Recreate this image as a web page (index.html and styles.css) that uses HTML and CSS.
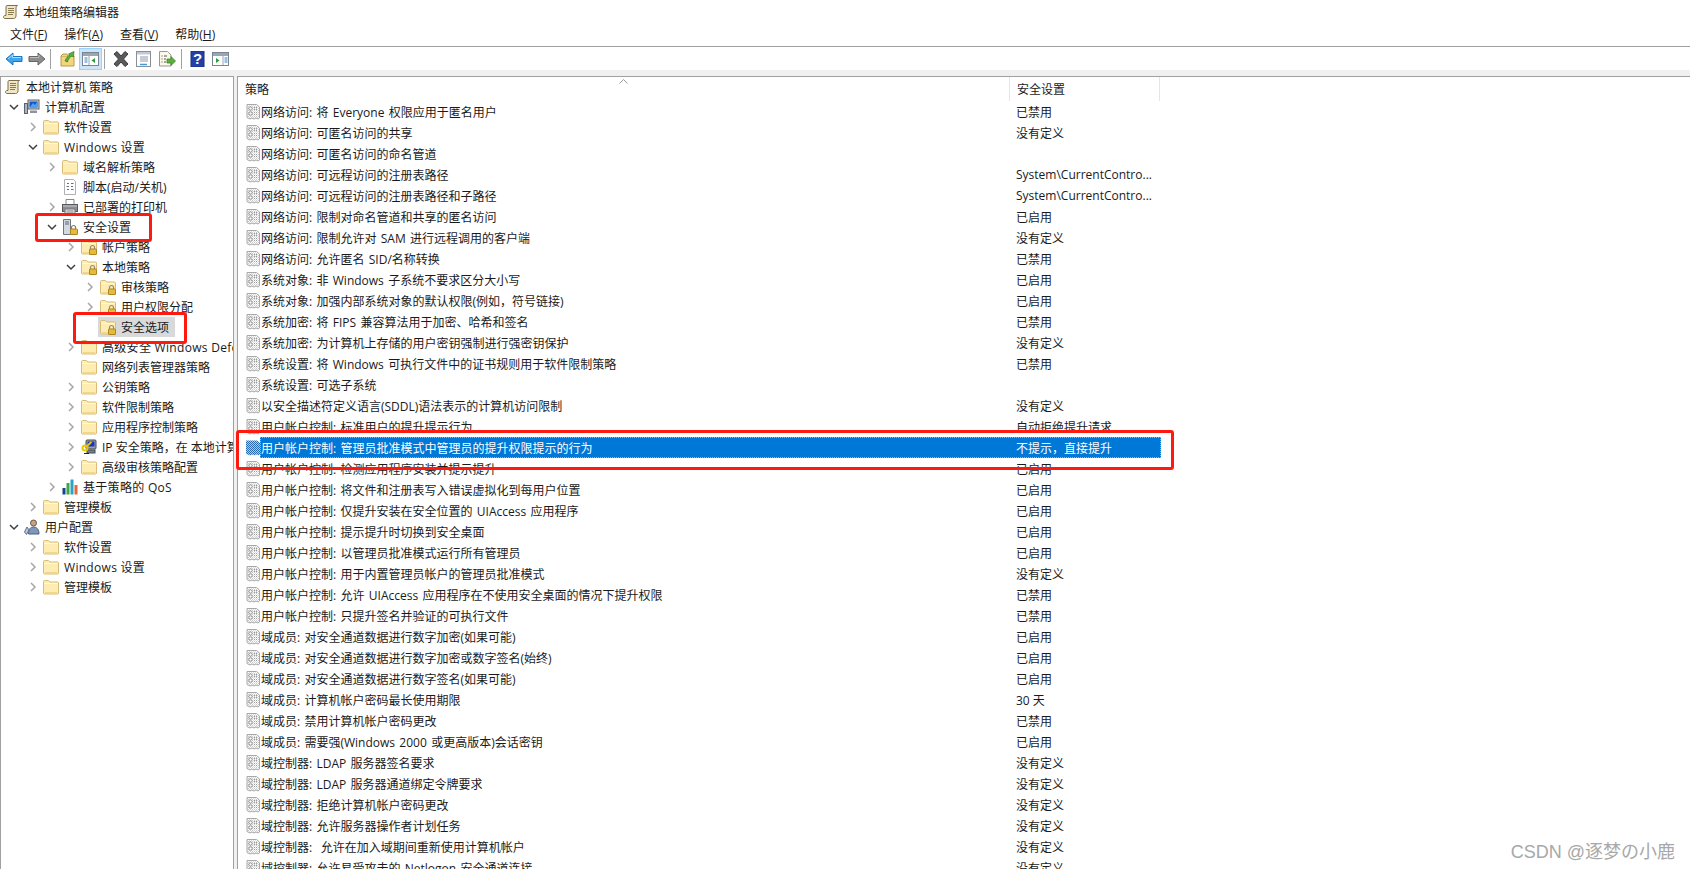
FILE: index.html
```html
<!DOCTYPE html>
<html lang="zh-CN">
<head>
<meta charset="utf-8">
<title>本地组策略编辑器</title>
<link rel="stylesheet" href="styles.css">
</head>
<body>
<svg class="defs" width="0" height="0" aria-hidden="true">
  <defs>
    <pattern id="hatch" width="2" height="2" patternUnits="userSpaceOnUse"><rect width="2" height="2" fill="#fff"/><rect width="1" height="1" fill="#c9c9c9"/><rect x="1" y="1" width="1" height="1" fill="#dcdcdc"/></pattern>
    <pattern id="hatchsel" width="2" height="2" patternUnits="userSpaceOnUse"><rect width="2" height="2" fill="#a9cdee"/><rect width="1" height="1" fill="#2a6cb4"/><rect x="1" y="1" width="1" height="1" fill="#2a6cb4"/></pattern>
    <symbol id="scroll" viewBox="0 0 16 16"><path d="M4 1.500h10.500c-1 .6-1.500 1.200-1.500 2.500v8c0 1.500-1 2.500-2.500 2.500H2c-1 0-1.500-.7-1.500-1.500S1 11.500 2 11.500h1V3c0-1 .4-1.500 1-1.500z" fill="#f2e7c4" stroke="#7d6f4e"/><path d="M5 4.500h6M5 6.500h6M5 8.500h6M5 10.500h5" stroke="#8a7b55"/></symbol>
    <symbol id="folder" viewBox="0 0 16 16"><path d="M.5 2.500c0-.6.4-1 1-1h4l1.500 1.500h7.500c.6 0 1 .4 1 1v10c0 .6-.4 1-1 1h-13c-.6 0-1-.4-1-1z" fill="#fdedb2" stroke="#d8bd7a"/><path d="M1.500 4.500h13" stroke="#fff9e2"/><path d="M2 13.500h12" stroke="#f3d68a"/></symbol>
    <symbol id="lockfolder" viewBox="0 0 16 16"><use href="#folder"/><path d="M9.500 10V8.500a2 2 0 0 1 4 0V10" fill="none" stroke="#8f8a7a" stroke-width="1.200"/><rect x="8.500" y="10" width="7" height="5.500" rx=".5" fill="#e6b93f" stroke="#ae861f"/></symbol>
    <symbol id="policy" viewBox="0 0 14 16"><path d="M1 .5h9.500l3 2.500v11l-1.500 1-2-1-2 1-2-1-2 1-3-1.500z" fill="url(#hatch)" stroke="#a8a8a8"/><circle cx="4.500" cy="4.500" r="1.700" fill="#fff" stroke="#8c8c8c"/><circle cx="4.500" cy="9.500" r="1.700" fill="#fff" stroke="#8c8c8c"/><path d="M8 3.500h3M8 5.500h3M8 8.500h3M8 10.500h3" stroke="#9a9a9a" stroke-dasharray="1 1"/></symbol>
    <symbol id="policysel" viewBox="0 0 14 16"><path d="M0 .5h11l3 2.500v11l-1.500 1.500-2-1-2 1-2-1-2 1-4.500-1.500z" fill="url(#hatchsel)"/></symbol>
    <symbol id="computer" viewBox="0 0 16 16"><rect x="4" y="1" width="11" height="9" fill="#c9cfd8" stroke="#5a6270"/><rect x="5.500" y="2.500" width="8" height="6" fill="#1556c8"/><path d="M6 8l3-4 2 2 2-3v5z" fill="#4ea1ef"/><rect x=".5" y="4.500" width="3" height="10" fill="#aeb4bd" stroke="#5a6270"/><path d="M6 11.500h7v2.500H6z" fill="#8d949e"/></symbol>
    <symbol id="script" viewBox="0 0 16 16"><path d="M2.500.5h9l2 2v13h-11z" fill="#fff" stroke="#b0b0b0"/><path d="M5 4.500h2M9 4.500h2.500M4.500 7.500h2.500M9 7.500h2M5 10.500h2M9 10.500h2.500" stroke="#5f6f82"/></symbol>
    <symbol id="printer" viewBox="0 0 16 16"><path d="M4 .5h8v5H4z" fill="#fff" stroke="#8a8a8a"/><rect x=".5" y="5.500" width="15" height="7" fill="#8b8f95" stroke="#55585c"/><path d="M1 7h14" stroke="#c5c8cc"/><rect x="3" y="10" width="10" height="5.500" fill="#e4e4e4" stroke="#77797c"/><path d="M4.500 12h7M4.500 14h7" stroke="#888"/></symbol>
    <symbol id="server" viewBox="0 0 16 16"><path d="M1.500.5h7v15h-7z" fill="#d3d8df" stroke="#6e7683"/><path d="M3 3h4M3 5h4" stroke="#5c6675"/><path d="M9.500 10V8.500a2 2 0 0 1 4 0V10" fill="none" stroke="#8d7a4b" stroke-width="1.200"/><rect x="8.500" y="10" width="7" height="5.500" rx=".5" fill="#e6b93f" stroke="#ae861f"/></symbol>
    <symbol id="ipkey" viewBox="0 0 16 16"><rect x="5" y="1" width="10" height="9" rx="1" fill="#9ca3ad" stroke="#444a52"/><rect x="6.500" y="2.500" width="7" height="5" fill="#1a35b8"/><rect x="6" y="11" width="8" height="3" fill="#77808b" stroke="#444a52"/><circle cx="4" cy="9" r="2.500" fill="none" stroke="#e8c600" stroke-width="2"/><path d="M5.500 7.500l5-4.500" stroke="#e8c600" stroke-width="2"/><path d="M3 14.500h5" stroke="#222"/></symbol>
    <symbol id="qos" viewBox="0 0 16 16"><rect x=".5" y="9" width="3" height="6.500" fill="#1a3f9c"/><rect x="4.500" y="4" width="3" height="11.500" fill="#3fa83f"/><rect x="8.500" y=".5" width="3" height="15" fill="#2aa3c9"/><rect x="12.500" y="6" width="3" height="9.500" fill="#e2693c"/></symbol>
    <symbol id="user" viewBox="0 0 16 16"><circle cx="9.500" cy="4" r="3" fill="#c9a284" stroke="#6d5a4b"/><path d="M4.500 15c0-5 2-7 5-7s5.500 2 5.500 7z" fill="#7f97b8" stroke="#4c5e78"/><path d="M3 8l-2.500 5 2 2.500L5 11z" fill="#b9c9e0" stroke="#5b6f8e"/></symbol>
    <symbol id="right" viewBox="0 0 10 10"><path d="M3 1l4 4-4 4" fill="none" stroke="#a6a6a6" stroke-width="1.500"/></symbol>
    <symbol id="down" viewBox="0 0 10 10"><path d="M1 3l4 4 4-4" fill="none" stroke="#404040" stroke-width="1.500"/></symbol>
  </defs>
</svg>

<div class="window">
  <div class="titlebar">
    <svg class="title-icon"><use href="#scroll"/></svg>
    <span>本地组策略编辑器</span>
  </div>
  <div class="menubar">
    <span class="menu">文件(<u>F</u>)</span>
    <span class="menu">操作(<u>A</u>)</span>
    <span class="menu">查看(<u>V</u>)</span>
    <span class="menu">帮助(<u>H</u>)</span>
  </div>
  <div class="toolbar">
    <span class="tool"><svg class="ti" viewBox="0 0 18 16"><path d="M1 8l7-6v3.500h9v5H8V14z" fill="#3ca6ee" stroke="#1a76c0"/><path d="M3 8l4.500-4v2.500H16" fill="none" stroke="#a8dcff"/></svg></span>
    <span class="tool"><svg class="ti" viewBox="0 0 18 16"><path d="M17 8l-7-6v3.500H1v5h9V14z" fill="#8d8d8d" stroke="#666"/><path d="M2 6.500h9V4" fill="none" stroke="#bdbdbd"/></svg></span>
    <span class="tsep tsep-a"></span>
    <span class="tool"><svg class="ti" viewBox="0 0 18 16"><path d="M2 5h13v10H2z" fill="#f4d57e" stroke="#b99a44"/><path d="M2 5l2-2h4l1 2" fill="#f4d57e" stroke="#b99a44"/><path d="M6 10c1-3 3-5 5-6L9.500 3 15 .5 14.500 6l-1.500-1c-2 1-4 3-4.500 6z" fill="#58b23a" stroke="#2f7d1f" stroke-width=".7"/></svg></span>
    <span class="tool tool-on"><svg class="ti" viewBox="0 0 18 16"><rect x=".5" y="1.500" width="16" height="13" fill="#fff" stroke="#7a8592"/><path d="M1 2h15v3H1z" fill="#9aa6b3"/><path d="M7 5v9" stroke="#9aa6b3"/><path d="M2.500 7h3M2.500 9h3M2.500 11h3" stroke="#3b7fc4"/><path d="M13 7v5l-3.500-2.500z" fill="#2c9c3a"/></svg></span>
    <span class="tsep"></span>
    <span class="tool"><svg class="ti" viewBox="0 0 18 16"><path d="M2 3l3-2.500L9 5l4-4.500L16 3l-4.500 5 4.500 5-3 2.500L9 11l-4 4.500L2 13l4.500-5z" fill="#5a5a5a" stroke="#3d3d3d"/></svg></span>
    <span class="tool"><svg class="ti" viewBox="0 0 18 16"><rect x="1.500" y=".5" width="14" height="15" fill="#fff" stroke="#8a8f96"/><path d="M2 1h13v2.500H2z" fill="#c4cad2"/><path d="M5 6h8M5 8h8M5 10h8" stroke="#8e99a6"/><path d="M5 13.500h7" stroke="#3c9be0" stroke-width="1.500"/></svg></span>
    <span class="tool"><svg class="ti" viewBox="0 0 18 16"><path d="M1.500.5h8l3.500 3.500v11H1.500z" fill="#fbf7ea" stroke="#999"/><path d="M3.500 5h1M6 5h3M3.500 8h1M6 8h2M3.500 11h1M6 11h2" stroke="#555"/><path d="M9 8h4V5.500L17.500 10 13 14.500V12H9z" fill="#58b23a" stroke="#2f7d1f" stroke-width=".7"/></svg></span>
    <span class="tsep tsep-c"></span>
    <span class="tool"><svg class="ti" viewBox="0 0 18 16"><rect x="2" y="0" width="13" height="16" fill="#2240a8" stroke="#1b2f7c"/><text class="help-q" x="8.500" y="13">?</text></svg></span>
    <span class="tool"><svg class="ti" viewBox="0 0 18 16"><rect x=".5" y="1.500" width="16" height="13" fill="#fff" stroke="#7a8592"/><path d="M1 2h15v3H1z" fill="#9aa6b3"/><path d="M11 5v9" stroke="#9aa6b3"/><path d="M12.500 7h3M12.500 9h3M12.500 11h3" stroke="#3b7fc4"/><path d="M4 7v5l3.500-2.500z" fill="#2c9c3a"/></svg></span>
  </div>

  <div class="panes">
    <div class="tree">
      <div class="node l0"><svg class="ic"><use href="#scroll"/></svg><span class="lab">本地计算机 策略</span></div>
      <div class="node l1"><svg class="cv"><use href="#down"/></svg><svg class="ic"><use href="#computer"/></svg><span class="lab">计算机配置</span></div>
      <div class="node l2"><svg class="cv"><use href="#right"/></svg><svg class="ic"><use href="#folder"/></svg><span class="lab">软件设置</span></div>
      <div class="node l2"><svg class="cv"><use href="#down"/></svg><svg class="ic"><use href="#folder"/></svg><span class="lab lab-latin">Windows 设置</span></div>
      <div class="node l3"><svg class="cv"><use href="#right"/></svg><svg class="ic"><use href="#folder"/></svg><span class="lab">域名解析策略</span></div>
      <div class="node l3"><span class="cv"></span><svg class="ic"><use href="#script"/></svg><span class="lab">脚本(启动/关机)</span></div>
      <div class="node l3"><svg class="cv"><use href="#right"/></svg><svg class="ic"><use href="#printer"/></svg><span class="lab">已部署的打印机</span></div>
      <div class="node l3"><svg class="cv"><use href="#down"/></svg><svg class="ic"><use href="#server"/></svg><span class="lab">安全设置</span></div>
      <div class="node l4"><svg class="cv"><use href="#right"/></svg><svg class="ic"><use href="#lockfolder"/></svg><span class="lab">帐户策略</span></div>
      <div class="node l4"><svg class="cv"><use href="#down"/></svg><svg class="ic"><use href="#lockfolder"/></svg><span class="lab">本地策略</span></div>
      <div class="node l5"><svg class="cv"><use href="#right"/></svg><svg class="ic"><use href="#lockfolder"/></svg><span class="lab">审核策略</span></div>
      <div class="node l5"><svg class="cv"><use href="#right"/></svg><svg class="ic"><use href="#lockfolder"/></svg><span class="lab">用户权限分配</span></div>
      <div class="node l5"><span class="cv"></span><span class="current"><svg class="ic"><use href="#lockfolder"/></svg><span class="lab">安全选项</span></span></div>
      <div class="node l4"><svg class="cv"><use href="#right"/></svg><svg class="ic"><use href="#folder"/></svg><span class="lab lab-latin">高级安全 Windows Defender 防火墙</span></div>
      <div class="node l4"><span class="cv"></span><svg class="ic"><use href="#folder"/></svg><span class="lab">网络列表管理器策略</span></div>
      <div class="node l4"><svg class="cv"><use href="#right"/></svg><svg class="ic"><use href="#folder"/></svg><span class="lab">公钥策略</span></div>
      <div class="node l4"><svg class="cv"><use href="#right"/></svg><svg class="ic"><use href="#folder"/></svg><span class="lab">软件限制策略</span></div>
      <div class="node l4"><svg class="cv"><use href="#right"/></svg><svg class="ic"><use href="#folder"/></svg><span class="lab">应用程序控制策略</span></div>
      <div class="node l4"><svg class="cv"><use href="#right"/></svg><svg class="ic"><use href="#ipkey"/></svg><span class="lab">IP 安全策略，在 本地计算机</span></div>
      <div class="node l4"><svg class="cv"><use href="#right"/></svg><svg class="ic"><use href="#folder"/></svg><span class="lab">高级审核策略配置</span></div>
      <div class="node l3"><svg class="cv"><use href="#right"/></svg><svg class="ic"><use href="#qos"/></svg><span class="lab lab-latin">基于策略的 QoS</span></div>
      <div class="node l2"><svg class="cv"><use href="#right"/></svg><svg class="ic"><use href="#folder"/></svg><span class="lab">管理模板</span></div>
      <div class="node l1"><svg class="cv"><use href="#down"/></svg><svg class="ic"><use href="#user"/></svg><span class="lab">用户配置</span></div>
      <div class="node l2"><svg class="cv"><use href="#right"/></svg><svg class="ic"><use href="#folder"/></svg><span class="lab">软件设置</span></div>
      <div class="node l2"><svg class="cv"><use href="#right"/></svg><svg class="ic"><use href="#folder"/></svg><span class="lab lab-latin">Windows 设置</span></div>
      <div class="node l2"><svg class="cv"><use href="#right"/></svg><svg class="ic"><use href="#folder"/></svg><span class="lab">管理模板</span></div>
    </div>

    <div class="list">
      <div class="head">
        <span class="hcell hname">策略</span>
        <span class="hcell hset">安全设置</span>
        <svg class="sort" viewBox="0 0 9 5"><path d="M.5 4.500L4.500.5l4 4" fill="none" stroke="#9a9a9a"/></svg>
      </div>
      <div class="row"><svg class="pi"><use href="#policy"/></svg><div class="cells"><span class="name">网络访问: 将 Everyone 权限应用于匿名用户</span><span class="set">已禁用</span></div></div>
      <div class="row"><svg class="pi"><use href="#policy"/></svg><div class="cells"><span class="name">网络访问: 可匿名访问的共享</span><span class="set">没有定义</span></div></div>
      <div class="row"><svg class="pi"><use href="#policy"/></svg><div class="cells"><span class="name">网络访问: 可匿名访问的命名管道</span><span class="set"></span></div></div>
      <div class="row"><svg class="pi"><use href="#policy"/></svg><div class="cells"><span class="name">网络访问: 可远程访问的注册表路径</span><span class="set">System\CurrentContro...</span></div></div>
      <div class="row"><svg class="pi"><use href="#policy"/></svg><div class="cells"><span class="name">网络访问: 可远程访问的注册表路径和子路径</span><span class="set">System\CurrentContro...</span></div></div>
      <div class="row"><svg class="pi"><use href="#policy"/></svg><div class="cells"><span class="name">网络访问: 限制对命名管道和共享的匿名访问</span><span class="set">已启用</span></div></div>
      <div class="row"><svg class="pi"><use href="#policy"/></svg><div class="cells"><span class="name">网络访问: 限制允许对 SAM 进行远程调用的客户端</span><span class="set">没有定义</span></div></div>
      <div class="row"><svg class="pi"><use href="#policy"/></svg><div class="cells"><span class="name">网络访问: 允许匿名 SID/名称转换</span><span class="set">已禁用</span></div></div>
      <div class="row"><svg class="pi"><use href="#policy"/></svg><div class="cells"><span class="name">系统对象: 非 Windows 子系统不要求区分大小写</span><span class="set">已启用</span></div></div>
      <div class="row"><svg class="pi"><use href="#policy"/></svg><div class="cells"><span class="name">系统对象: 加强内部系统对象的默认权限(例如，符号链接)</span><span class="set">已启用</span></div></div>
      <div class="row"><svg class="pi"><use href="#policy"/></svg><div class="cells"><span class="name">系统加密: 将 FIPS 兼容算法用于加密、哈希和签名</span><span class="set">已禁用</span></div></div>
      <div class="row"><svg class="pi"><use href="#policy"/></svg><div class="cells"><span class="name">系统加密: 为计算机上存储的用户密钥强制进行强密钥保护</span><span class="set">没有定义</span></div></div>
      <div class="row"><svg class="pi"><use href="#policy"/></svg><div class="cells"><span class="name">系统设置: 将 Windows 可执行文件中的证书规则用于软件限制策略</span><span class="set">已禁用</span></div></div>
      <div class="row"><svg class="pi"><use href="#policy"/></svg><div class="cells"><span class="name">系统设置: 可选子系统</span><span class="set"></span></div></div>
      <div class="row"><svg class="pi"><use href="#policy"/></svg><div class="cells"><span class="name">以安全描述符定义语言(SDDL)语法表示的计算机访问限制</span><span class="set">没有定义</span></div></div>
      <div class="row"><svg class="pi"><use href="#policy"/></svg><div class="cells"><span class="name">用户帐户控制: 标准用户的提升提示行为</span><span class="set">自动拒绝提升请求</span></div></div>
      <div class="row row-selected"><svg class="pi"><use href="#policysel"/></svg><div class="cells"><span class="name">用户帐户控制: 管理员批准模式中管理员的提升权限提示的行为</span><span class="set">不提示，直接提升</span></div></div>
      <div class="row"><svg class="pi"><use href="#policy"/></svg><div class="cells"><span class="name">用户帐户控制: 检测应用程序安装并提示提升</span><span class="set">已启用</span></div></div>
      <div class="row"><svg class="pi"><use href="#policy"/></svg><div class="cells"><span class="name">用户帐户控制: 将文件和注册表写入错误虚拟化到每用户位置</span><span class="set">已启用</span></div></div>
      <div class="row"><svg class="pi"><use href="#policy"/></svg><div class="cells"><span class="name">用户帐户控制: 仅提升安装在安全位置的 UIAccess 应用程序</span><span class="set">已启用</span></div></div>
      <div class="row"><svg class="pi"><use href="#policy"/></svg><div class="cells"><span class="name">用户帐户控制: 提示提升时切换到安全桌面</span><span class="set">已启用</span></div></div>
      <div class="row"><svg class="pi"><use href="#policy"/></svg><div class="cells"><span class="name">用户帐户控制: 以管理员批准模式运行所有管理员</span><span class="set">已启用</span></div></div>
      <div class="row"><svg class="pi"><use href="#policy"/></svg><div class="cells"><span class="name">用户帐户控制: 用于内置管理员帐户的管理员批准模式</span><span class="set">没有定义</span></div></div>
      <div class="row"><svg class="pi"><use href="#policy"/></svg><div class="cells"><span class="name">用户帐户控制: 允许 UIAccess 应用程序在不使用安全桌面的情况下提升权限</span><span class="set">已禁用</span></div></div>
      <div class="row"><svg class="pi"><use href="#policy"/></svg><div class="cells"><span class="name">用户帐户控制: 只提升签名并验证的可执行文件</span><span class="set">已禁用</span></div></div>
      <div class="row"><svg class="pi"><use href="#policy"/></svg><div class="cells"><span class="name">域成员: 对安全通道数据进行数字加密(如果可能)</span><span class="set">已启用</span></div></div>
      <div class="row"><svg class="pi"><use href="#policy"/></svg><div class="cells"><span class="name">域成员: 对安全通道数据进行数字加密或数字签名(始终)</span><span class="set">已启用</span></div></div>
      <div class="row"><svg class="pi"><use href="#policy"/></svg><div class="cells"><span class="name">域成员: 对安全通道数据进行数字签名(如果可能)</span><span class="set">已启用</span></div></div>
      <div class="row"><svg class="pi"><use href="#policy"/></svg><div class="cells"><span class="name">域成员: 计算机帐户密码最长使用期限</span><span class="set">30 天</span></div></div>
      <div class="row"><svg class="pi"><use href="#policy"/></svg><div class="cells"><span class="name">域成员: 禁用计算机帐户密码更改</span><span class="set">已禁用</span></div></div>
      <div class="row"><svg class="pi"><use href="#policy"/></svg><div class="cells"><span class="name">域成员: 需要强(Windows 2000 或更高版本)会话密钥</span><span class="set">已启用</span></div></div>
      <div class="row"><svg class="pi"><use href="#policy"/></svg><div class="cells"><span class="name">域控制器: LDAP 服务器签名要求</span><span class="set">没有定义</span></div></div>
      <div class="row"><svg class="pi"><use href="#policy"/></svg><div class="cells"><span class="name">域控制器: LDAP 服务器通道绑定令牌要求</span><span class="set">没有定义</span></div></div>
      <div class="row"><svg class="pi"><use href="#policy"/></svg><div class="cells"><span class="name">域控制器: 拒绝计算机帐户密码更改</span><span class="set">没有定义</span></div></div>
      <div class="row"><svg class="pi"><use href="#policy"/></svg><div class="cells"><span class="name">域控制器: 允许服务器操作者计划任务</span><span class="set">没有定义</span></div></div>
      <div class="row"><svg class="pi"><use href="#policy"/></svg><div class="cells"><span class="name">域控制器:&nbsp;&nbsp;允许在加入域期间重新使用计算机帐户</span><span class="set">没有定义</span></div></div>
      <div class="row"><svg class="pi"><use href="#policy"/></svg><div class="cells"><span class="name">域控制器: 允许易受攻击的 Netlogon 安全通道连接</span><span class="set">没有定义</span></div></div>
    </div>
  </div>

  <div class="mark mark-tree-a"></div>
  <div class="mark mark-tree-b"></div>
  <div class="mark mark-row"></div>
  <div class="watermark">CSDN @逐梦の小鹿</div>
</div>
</body>
</html>
```

FILE: styles.css
```css
* { box-sizing: border-box; }
html, body { margin: 0; padding: 0; height: 100%; overflow: hidden; background: #fff; }
body {
  font-family: "Open Sans", "Noto Sans CJK SC", sans-serif;
  font-size: 12px;
  color: #1a1a1a;
}
.defs { position: absolute; }
.window { position: relative; display: flex; flex-direction: column; width: 1690px; height: 869px; overflow: hidden; }

.titlebar { display: flex; align-items: center; height: 23px; padding-left: 3px; gap: 4px; flex: none; }
.title-icon { width: 16px; height: 16px; }

.menubar { display: flex; align-items: center; height: 24px; padding-left: 10px; gap: 17px; flex: none; border-bottom: 1px solid #a0a0a0; }
.menu { line-height: 22px; }
.menu u { text-underline-offset: 1px; }

.toolbar { display: flex; align-items: center; height: 23px; padding-left: 2px; flex: none; }
.tool { display: flex; align-items: center; justify-content: center; width: 23px; height: 22px; }
.tool-on { background: #cce4f7; border: 1px solid #99d1ff; }
.ti { width: 18px; height: 16px; }
.help-q { font-family: "Liberation Sans", sans-serif; font-size: 15px; font-weight: 700; fill: #fff; text-anchor: middle; }
.tsep { width: 1px; height: 20px; background: #a0a0a0; margin: 0 4px 0 2px; }
.tsep-a { margin-right: 5px; }
.tsep-c { margin-left: 3px; }

.panes { display: flex; flex: 1; min-height: 0; background: #f0f0f0; padding-top: 6px; gap: 3px; }
.tree { width: 234px; flex: none; background: #fff; border: 1px solid #a0a0a0; border-bottom: 0; overflow: hidden; }
.list { flex: 1; min-width: 0; background: #fff; border-top: 1px solid #a0a0a0; border-left: 1px solid #a0a0a0; overflow: hidden; }

.node { display: flex; align-items: center; height: 20px; white-space: nowrap; }
.l0 { padding-left: 4px; }
.l1 { padding-left: 4px; }
.l2 { padding-left: 23px; }
.l3 { padding-left: 42px; }
.l4 { padding-left: 61px; }
.l5 { padding-left: 80px; }
.cv { display: block; flex: none; width: 10px; height: 10px; margin: 0 5px 0 4px; }
.ic { display: block; flex: none; width: 16px; height: 16px; }
.lab { margin-left: 5px; }
.lab-latin { letter-spacing: .3px; }
.current { display: flex; align-items: center; height: 20px; background: #d9d9d9; margin-left: -2px; padding: 0 6px 0 2px; }

.head { position: relative; display: flex; height: 24px; }
.hcell { display: flex; align-items: center; height: 24px; padding-left: 7px; border-right: 1px solid #e5e5e5; }
.hname { width: 772px; }
.hset { width: 150px; }
.sort { position: absolute; left: 381px; top: 2px; width: 9px; height: 5px; }

.row { display: flex; align-items: center; height: 21px; padding-left: 8px; white-space: nowrap; }
.pi { display: block; flex: none; width: 14px; height: 16px; }
.cells { display: flex; align-items: center; width: 901px; height: 21px; }
.name { width: 756px; flex: none; padding-left: 1px; word-spacing: 1.2px; }
.set { width: 145px; flex: none; overflow: hidden; }
.row-selected .cells { background: #0078d7; color: #fff; outline: 1px dotted #e8a15a; outline-offset: -1px; }

.mark { position: absolute; border: 3px solid #ff1a10; border-radius: 3px; pointer-events: none; }
.mark-tree-a { left: 35px; top: 213px; width: 117px; height: 29px; }
.mark-tree-b { left: 73px; top: 312px; width: 114px; height: 32px; }
.mark-row { left: 236px; top: 430px; width: 938px; height: 40px; }

.watermark {
  position: absolute;
  right: 15px;
  top: 842px;
  font-family: "Liberation Sans", "Noto Sans CJK SC", sans-serif;
  font-size: 18px;
  line-height: 20px;
  color: #a8a8a8;
}
```
